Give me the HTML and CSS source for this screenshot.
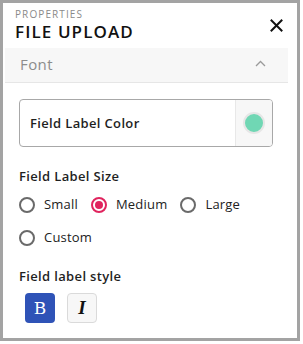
FILE: index.html
```html
<!DOCTYPE html>
<html>
<head>
<meta charset="utf-8">
<link rel="stylesheet" href="styles.css">
</head>
<body>
<div class="panel">
  <div class="header">
    <div class="titles">
      <div class="eyebrow">PROPERTIES</div>
      <div class="title">FILE UPLOAD</div>
    </div>
    <svg class="close" width="13" height="13" viewBox="0 0 13 13"><path d="M1.5 1.5 L11.5 11.5 M11.5 1.5 L1.5 11.5" stroke="#111" stroke-width="2" stroke-linecap="square"/></svg>
  </div>
  <div class="body">
    <div class="section-bar">
      <span class="section-name">Font</span>
      <svg class="chev" width="11" height="7" viewBox="0 0 11 7"><path d="M1 6 L5.5 1.5 L10 6" fill="none" stroke="#9a9a9a" stroke-width="1.3"/></svg>
    </div>
    <div class="content">
      <div class="color-field">
        <span class="color-label">Field Label Color</span>
        <div class="swatch-box"><span class="swatch"></span></div>
      </div>
      <div class="group-label">Field Label Size</div>
      <div class="radios">
        <label class="radio"><span class="dot"></span>Small</label>
        <label class="radio on"><span class="dot"></span>Medium</label>
        <label class="radio"><span class="dot"></span>Large</label>
        <label class="radio"><span class="dot"></span>Custom</label>
      </div>
      <div class="group-label style-label">Field label style</div>
      <div class="styles">
        <button class="sbtn bold">B</button>
        <button class="sbtn italic">I</button>
      </div>
    </div>
  </div>
</div>
</body>
</html>
```
FILE: styles.css
```css
* { box-sizing: border-box; }
body {
  margin: 0;
  background: #fff;
  font-family: "Open Sans", "Noto Sans", sans-serif;
  color: #1f1f1f;
}
.panel {
  width: 300px;
  height: 341px;
  border: 3px solid #a3a3a3;
  background: #fff;
}
.header {
  display: flex;
  justify-content: space-between;
  align-items: flex-start;
  padding: 6px 14px 0 12px;
  height: 45px;
}
.eyebrow {
  font-size: 10px;
  letter-spacing: 1.1px;
  color: #8a8a8a;
  line-height: 11px;
}
.title {
  font-size: 17px;
  font-weight: 600;
  letter-spacing: 1.1px;
  color: #111;
  line-height: 19px;
  margin-top: 2px;
}
.close { margin-top: 10px; }
.body { padding: 0 9px 0 2px; }
.section-bar {
  height: 35px;
  background: #f7f7f7;
  border-bottom: 1px solid #e6e6e6;
  display: flex;
  align-items: center;
  justify-content: space-between;
  padding: 0 22px 0 15px;
}
.section-name {
  font-size: 15px;
  color: #8c8c8c;
  letter-spacing: 0.4px;
  margin-top: -2px;
}
.chev { margin-top: -3px; }
.content { padding: 16px 15px 0 14px; }
.color-field {
  display: flex;
  height: 48px;
  border: 1px solid #a8a8a8;
  border-radius: 4px;
  overflow: hidden;
}
.color-label {
  flex: 1;
  display: flex;
  align-items: center;
  padding-left: 10px;
  font-size: 13px;
  font-weight: 600;
  letter-spacing: 0.35px;
  margin-top: -1px;
}
.swatch-box {
  width: 37px;
  background: #f7f7f7;
  border-left: 1px solid #e8e8e8;
  display: flex;
  align-items: center;
  justify-content: center;
}
.swatch {
  width: 22px;
  height: 22px;
  border-radius: 50%;
  background: #70d7b4;
  border: 2px solid #e6e6e6;
}
.group-label {
  font-size: 13px;
  font-weight: 600;
  margin-top: 20px;
  line-height: 18px;
  letter-spacing: 0.35px;
}
.radios {
  display: flex;
  flex-wrap: wrap;
  column-gap: 13px;
  row-gap: 14px;
  margin-top: 10px;
}
.radio {
  display: flex;
  align-items: center;
  font-size: 13px;
  color: #222;
  line-height: 19px;
  letter-spacing: 0.2px;
}
.dot {
  width: 16px;
  height: 16px;
  border-radius: 50%;
  border: 2px solid #6a6a6a;
  margin-right: 9px;
  display: flex;
  align-items: center;
  justify-content: center;
}
.radio.on .dot { border-color: #e0245e; }
.radio.on .dot::after {
  content: "";
  width: 8px;
  height: 8px;
  border-radius: 50%;
  background: #e0245e;
}
.style-label { margin-top: 20px; }
.styles {
  display: flex;
  gap: 12px;
  padding-left: 6px;
  margin-top: 8px;
}
.sbtn {
  width: 30px;
  height: 30px;
  border-radius: 4px;
  padding: 0;
  font-size: 17px;
  display: flex;
  align-items: center;
  justify-content: center;
}
.bold {
  background: #2f53b7;
  border: none;
  color: #fff;
  font-family: "DejaVu Serif", serif;
}
.italic {
  background: #f7f7f7;
  border: 1px solid #dadada;
  color: #111;
  font-family: "Liberation Serif", serif;
  font-style: italic;
  font-weight: bold;
  font-size: 19px;
}
```
